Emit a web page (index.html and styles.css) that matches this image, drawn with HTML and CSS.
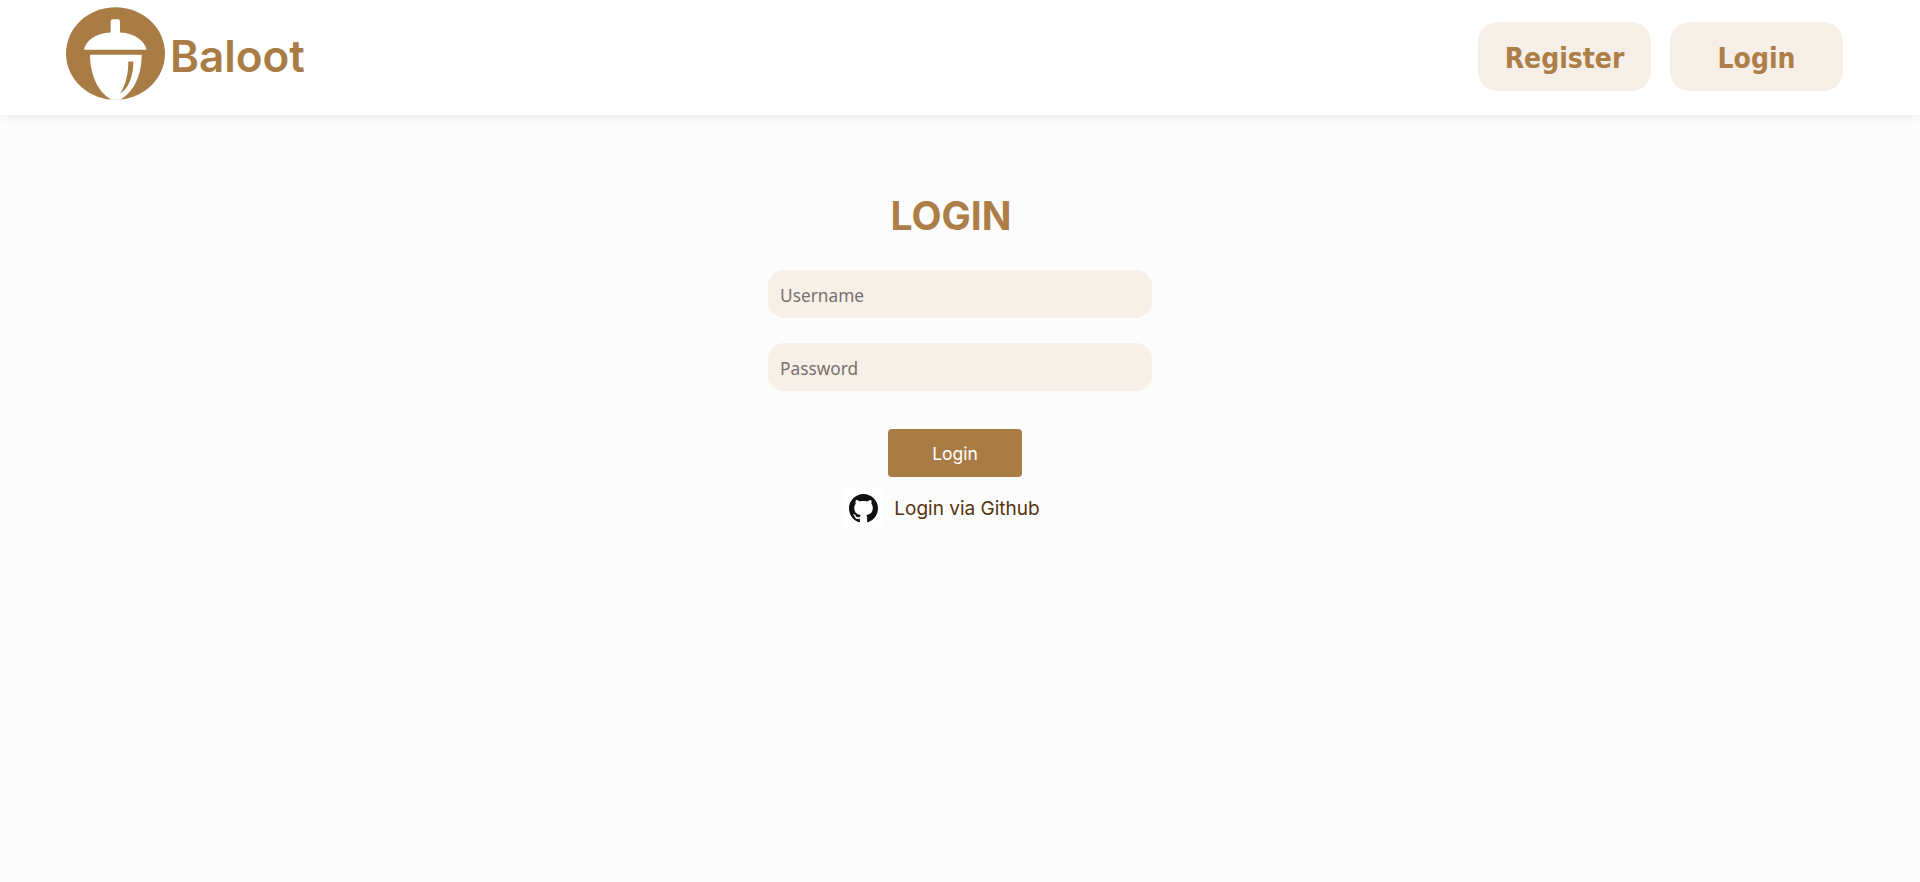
FILE: index.html
```html
<!DOCTYPE html>
<html lang="en">
<head>
  <meta charset="UTF-8">
  <meta name="viewport" content="width=device-width, initial-scale=1.0">
  <title>Baloot</title>
  <link rel="stylesheet" href="styles.css">
</head>
<body>

  <!-- Header -->
  <header class="header">
    <a class="brand" href="#">
      <svg class="brand-logo" viewBox="78 22 297 278" aria-hidden="true">
        <ellipse cx="226.5" cy="161" rx="148.5" ry="139" fill="#a97c46"/>
        <path fill="#fff" d="M132 150C136 125 165 100 212 98L212 64Q212 58 218 58L234 58Q240 58 240 64L240 98C285 100 315 125 320 150Z"/>
        <path fill="#fff" d="M150 165L305 165C305 220 285 275 240 300L215 300C175 280 150 225 150 165Z"/>
        <path fill="#a97c46" d="M265 185L280 185C280 225 268 265 240 282C258 255 265 220 265 185Z"/>
      </svg>
      <span class="brand-name">Baloot</span>
    </a>
    <nav class="header-buttons">
      <button class="header-button">Register</button>
      <button class="header-button">Login</button>
    </nav>
  </header>

  <!-- Login form -->
  <main class="login">
    <h1 class="login-title">LOGIN</h1>
    <form class="login-form">
      <input class="login-input" type="text" placeholder="Username">
      <input class="login-input" type="password" placeholder="Password">
      <button class="login-submit" type="button">Login</button>
    </form>
    <a class="github-link" href="#">
      <span class="github-icon">
        <svg viewBox="0 0 16 16" width="29" height="29" aria-hidden="true">
          <path fill="#111" d="M8 0C3.58 0 0 3.58 0 8c0 3.54 2.29 6.53 5.47 7.59.4.07.55-.17.55-.38 0-.19-.01-.82-.01-1.49-2.01.37-2.53-.49-2.69-.94-.09-.23-.48-.94-.82-1.13-.28-.15-.68-.52-.01-.53.63-.01 1.08.58 1.23.82.72 1.21 1.87.87 2.33.66.07-.52.28-.87.51-1.07-1.78-.2-3.64-.89-3.64-3.95 0-.87.31-1.59.82-2.15-.08-.2-.36-1.02.08-2.12 0 0 .67-.21 2.2.82.64-.18 1.32-.27 2-.27.68 0 1.36.09 2 .27 1.53-1.04 2.2-.82 2.2-.82.44 1.1.16 1.92.08 2.12.51.56.82 1.27.82 2.15 0 3.07-1.87 3.75-3.65 3.95.29.25.54.73.54 1.48 0 1.07-.01 1.93-.01 2.2 0 .21.15.46.55.38A8.013 8.013 0 0016 8c0-4.42-3.58-8-8-8z"/>
        </svg>
      </span>
      <span class="github-text">Login via Github</span>
    </a>
  </main>

</body>
</html>
```

FILE: styles.css
```css
/* General Styles */
* {
  padding: 0;
  margin: 0;
  box-sizing: border-box;
}

body {
  font-family: 'Inter', sans-serif;
  background: #fcfcfc;
  min-height: 100vh;
}

/* Header */
.header {
  height: 115px;
  background: #fff;
  box-shadow: 0 3px 9px rgba(0, 0, 0, 0.06);
  display: flex;
  justify-content: space-between;
  align-items: flex-start;
  padding: 7px 77px 0 66px;
}

.brand {
  display: flex;
  align-items: center;
  gap: 5px;
  text-decoration: none;
}

.brand-logo {
  width: 99px;
  height: 93px;
}

.brand-name {
  padding-top: 4px;
  font-family: 'Inter', sans-serif;
  font-size: 44px;
  font-weight: 600;
  color: #a97c46;
}

.header-buttons {
  display: flex;
  gap: 19px;
  margin-top: 15px;
}

.header-button {
  width: 173px;
  height: 69px;
  padding-top: 3px;
  border: none;
  border-radius: 20px;
  background: #f6efe8;
  color: #ad7e47;
  font-family: 'DejaVu Sans Condensed', 'DejaVu Sans', sans-serif;
  font-size: 28px;
  font-weight: 700;
  cursor: pointer;
}

/* Login form */
.login {
  display: flex;
  flex-direction: column;
  align-items: center;
}

.login-title {
  margin-top: 69px;
  margin-bottom: 7px;
  margin-right: 18px;
  font-family: 'Inter', sans-serif;
  font-size: 39px;
  font-weight: 700;
  line-height: 64px;
  color: #ad7e47;
}

.login-form {
  display: flex;
  flex-direction: column;
  align-items: center;
  margin-top: 15px;
}

.login-input {
  width: 384px;
  height: 48px;
  margin-bottom: 25px;
  padding: 2px 13px 0 12px;
  border: none;
  border-radius: 16px;
  background: #f7f0e9;
  font-family: 'Noto Sans', sans-serif;
  font-size: 17.3px;
  outline: none;
}

.login-input::placeholder {
  color: #76716d;
}

.login-submit {
  width: 134px;
  height: 48px;
  margin-top: 13px;
  margin-right: 10px;
  border: none;
  border-radius: 4px;
  background: #a97c46;
  color: #fff;
  font-family: 'Inter', sans-serif;
  font-size: 17.5px;
  cursor: pointer;
}

.github-link {
  display: flex;
  align-items: center;
  gap: 12px;
  margin-top: 12px;
  margin-right: 36px;
  color: #55330b;
  font-size: 19px;
  text-decoration: none;
}

.github-icon {
  width: 38px;
  height: 38px;
  background: #fff;
  display: flex;
  align-items: center;
  justify-content: center;
}

.github-text {
  font-weight: 400;
}
```
